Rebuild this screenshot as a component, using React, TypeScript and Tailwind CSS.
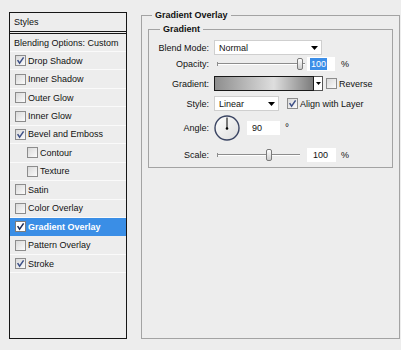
import React from 'react';

type StyleItem = { label: string; checked?: boolean; indent?: boolean; active?: boolean };

const STYLE_ITEMS: StyleItem[] = [
  { label: 'Drop Shadow', checked: true },
  { label: 'Inner Shadow' },
  { label: 'Outer Glow' },
  { label: 'Inner Glow' },
  { label: 'Bevel and Emboss', checked: true },
  { label: 'Contour', indent: true },
  { label: 'Texture', indent: true },
  { label: 'Satin' },
  { label: 'Color Overlay' },
  { label: 'Gradient Overlay', checked: true, active: true },
  { label: 'Pattern Overlay' },
  { label: 'Stroke', checked: true },
];

function Check({ on, light }: { on?: boolean; light?: boolean }) {
  return (
    <span
      className={
        light
          ? 'flex h-[11px] w-[11px] shrink-0 items-center justify-center border border-[#7d7d7d] bg-white'
          : 'flex h-[11px] w-[11px] shrink-0 items-center justify-center border border-[#8c8c8c] bg-gradient-to-br from-[#d9d9d9] to-[#fbfbfb]'
      }
    >
      {on && (
        <svg width="9" height="9" viewBox="0 0 9 9">
          <path d="M1.6 4.2 L3.6 7.2 L7.6 1.4" fill="none" stroke={light ? '#1b2a55' : '#3c4f86'} strokeWidth="1.5" />
        </svg>
      )}
    </span>
  );
}

function Arrow() {
  return (
    <svg width="7" height="4" viewBox="0 0 7 4" className="shrink-0">
      <path d="M0 0 H7 L3.5 4 Z" fill="#000" />
    </svg>
  );
}

function Select({ value, className }: { value: string; className: string }) {
  return (
    <div className={`flex h-full items-center justify-between border border-[#cfcfcf] bg-white pl-[4px] pr-[3px] ${className}`}>
      <span>{value}</span>
      <Arrow />
    </div>
  );
}

function Slider({ className, thumb }: { className: string; thumb: string }) {
  return (
    <div className={`relative flex h-[12px] items-center ${className}`}>
      <div className="h-[2px] w-full border-t border-[#8d8d8d] bg-white" />
      <div className="absolute left-0 top-[4px] h-[4px] w-[1px] bg-[#8d8d8d]" />
      <div className={`absolute top-0 h-[12px] w-[6px] rounded-[2px] border border-[#7a7a7a] bg-gradient-to-b from-white to-[#cdcdcd] ${thumb}`} />
    </div>
  );
}

function Row({ label, className, children }: { label: string; className: string; children: React.ReactNode }) {
  return (
    <div className={`flex items-center ${className}`}>
      <span className="mr-[5px] w-[60px] shrink-0 text-right">{label}</span>
      {children}
    </div>
  );
}

export default function App() {
  return (
    <div className="flex h-[350px] w-[401px] items-start bg-[#ededed] font-['Liberation_Sans',Arial,sans-serif] text-[9px] leading-[12px] text-[#111]">
      {/* Styles list */}
      <div className="ml-[9px] mt-[12px] flex h-[327px] w-[118px] shrink-0 flex-col border border-[#161616] bg-[#ededed]">
        <div className="flex h-[21px] shrink-0 items-center border-b-[3px] border-double border-[#161616] pl-[4px]">Styles</div>
        <div className="flex h-[18px] shrink-0 items-center border-b border-[#fafafa] pl-[4px]">Blending Options: Custom</div>
        {STYLE_ITEMS.map((item) => (
          <div
            key={item.label}
            className={`flex h-[18.45px] shrink-0 items-center border-b ${item.indent ? 'pl-[17px]' : 'pl-[5px]'} ${
              item.active ? 'border-[#3a8ee6] bg-[#3a8ee6] font-bold text-white' : 'border-[#fafafa]'
            }`}
          >
            <Check on={item.checked} light={item.active} />
            <span className="ml-[2px]">{item.label}</span>
          </div>
        ))}
      </div>

      {/* Gradient Overlay settings */}
      <fieldset className="ml-[14px] mt-[9px] h-[330px] w-[259px] shrink-0 border border-[#a3a3a3]">
        <legend className="ml-[10px] px-[3px] font-bold leading-[12px]">Gradient Overlay</legend>
        <fieldset className="ml-[6px] mt-[2px] w-[245px] border border-[#a3a3a3] pb-[5px]">
          <legend className="ml-[11px] px-[3px] font-bold leading-[12px]">Gradient</legend>

          <Row label="Blend Mode:" className="mt-[5px] h-[15px]">
            <Select value="Normal" className="w-[108px]" />
          </Row>

          <Row label="Opacity:" className="mt-[2px] h-[14px]">
            <Slider className="ml-[3px] w-[88px]" thumb="left-[80px]" />
            <div className="ml-[2px] flex h-[14px] w-[28px] items-center bg-white pl-[3px]">
              <span className="bg-[#3b8ee8] px-[1px] text-white">100</span>
            </div>
            <span className="ml-[6px]">%</span>
          </Row>

          <Row label="Gradient:" className="mt-[5px] h-[15px]">
            <div className="h-[15px] w-[100px] border border-[#1a1a1a] bg-[linear-gradient(to_right,#8e8e8e,#dedede_60%,#7c7c7c)]" />
            <div className="flex h-[15px] w-[9px] items-center justify-center border border-l-0 border-[#555] bg-white">
              <svg width="5" height="3" viewBox="0 0 5 3">
                <path d="M0 0 H5 L2.5 3 Z" fill="#000" />
              </svg>
            </div>
            <span className="ml-[3px]">
              <Check />
            </span>
            <span className="ml-[2px]">Reverse</span>
          </Row>

          <Row label="Style:" className="mt-[5px] h-[15px]">
            <Select value="Linear" className="w-[65px]" />
            <span className="ml-[8px]">
              <Check on />
            </span>
            <span className="ml-[2px]">Align with Layer</span>
          </Row>

          <Row label="Angle:" className="mt-[4px] h-[26px]">
            <svg width="26" height="26" viewBox="0 0 26 26" className="shrink-0">
              <defs>
                <linearGradient id="dial" x1="0" y1="0" x2="1" y2="1">
                  <stop offset="0" stopColor="#ffffff" />
                  <stop offset="1" stopColor="#dcdcdc" />
                </linearGradient>
              </defs>
              <circle cx="13" cy="13" r="12" fill="url(#dial)" stroke="#3b4563" strokeWidth="1.4" />
              <line x1="13" y1="13.5" x2="13" y2="2.5" stroke="#000" strokeWidth="1" />
              <circle cx="13" cy="13.5" r="1.3" fill="#000" />
            </svg>
            <div className="ml-[7px] flex h-[14px] w-[33px] items-center bg-white pl-[5px]">90</div>
            <span className="ml-[5px] text-[10px]">°</span>
          </Row>

          <Row label="Scale:" className="mt-[7px] h-[14px]">
            <Slider className="ml-[3px] w-[83px]" thumb="left-[49px]" />
            <div className="ml-[7px] flex h-[14px] w-[29px] items-center bg-white pl-[6px]">100</div>
            <span className="ml-[5px]">%</span>
          </Row>
        </fieldset>
      </fieldset>
    </div>
  );
}
